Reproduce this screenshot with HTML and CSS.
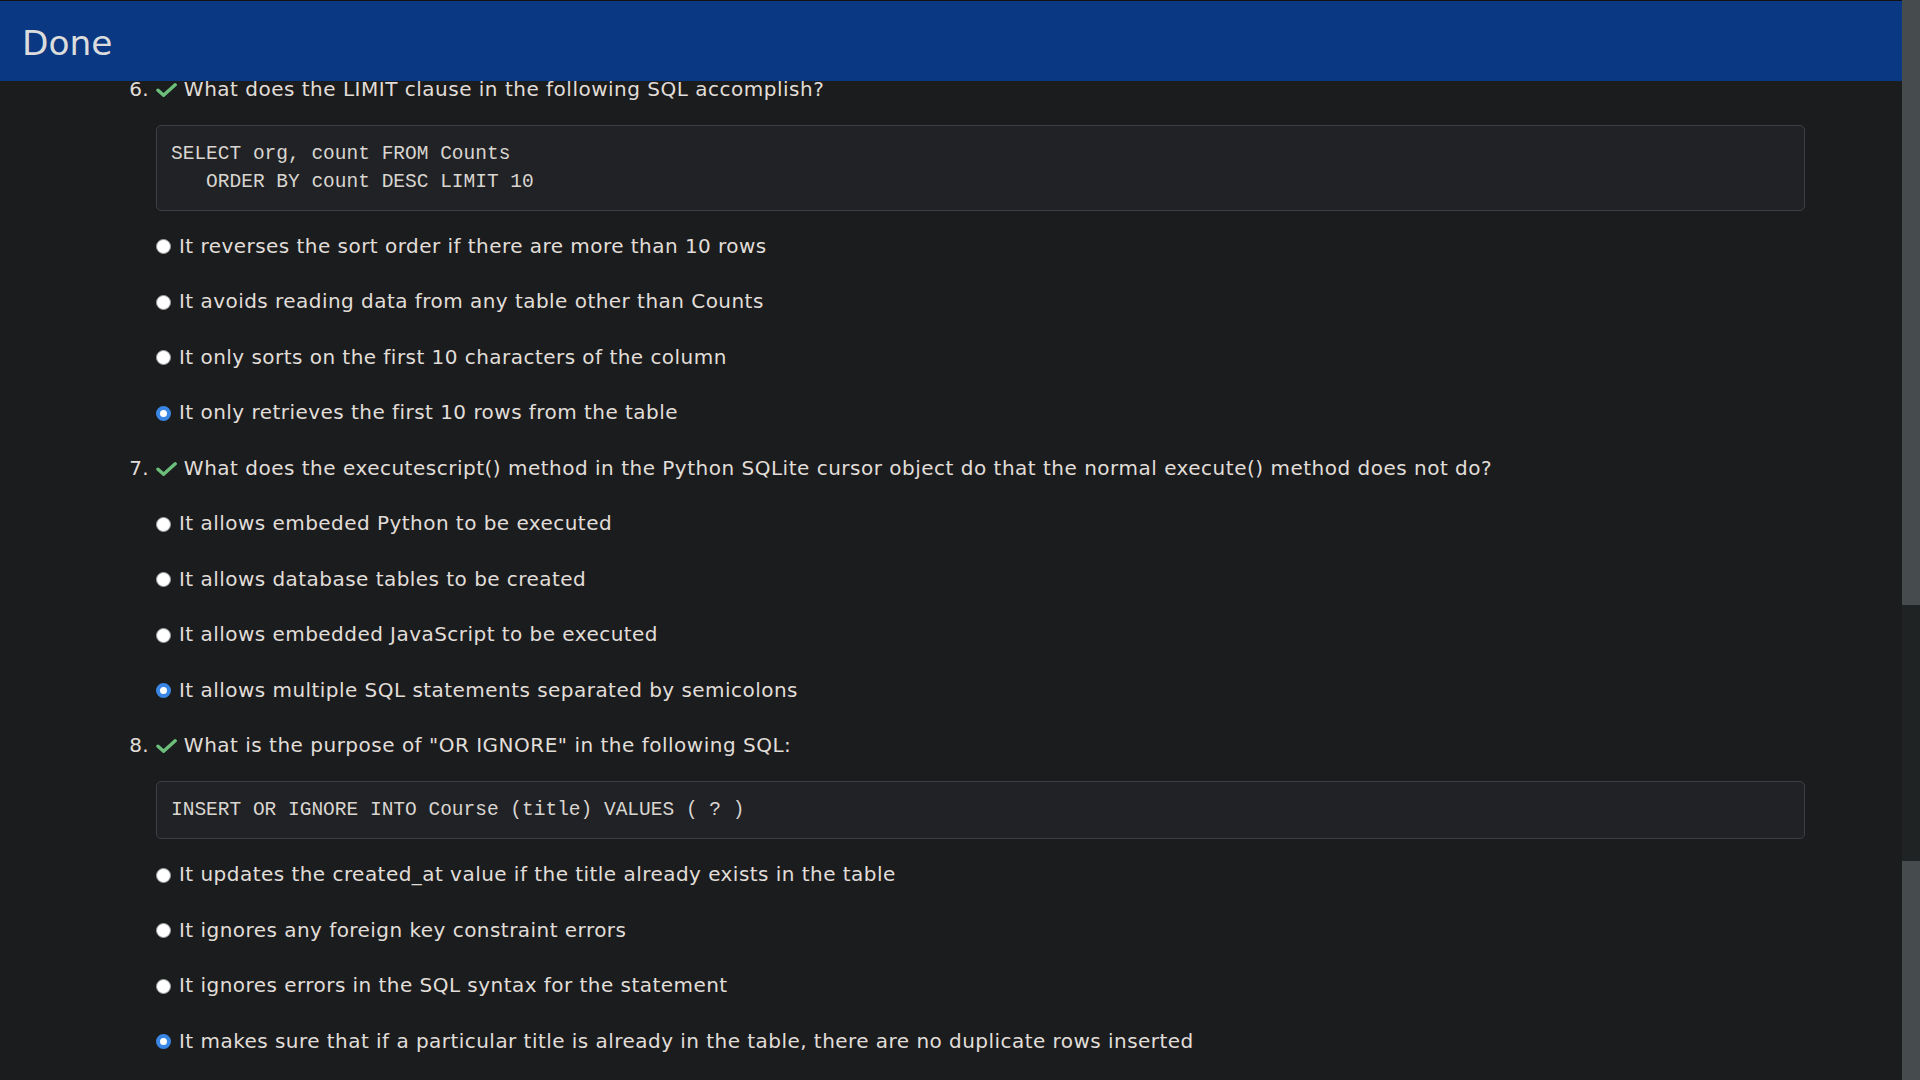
FILE: index.html
```html
<!DOCTYPE html>
<html lang="en">
<head>
<meta charset="utf-8">
<title>Done</title>
<link rel="stylesheet" href="styles.css">
</head>
<body>
<div class="app">
  <div class="main">
    <header class="topbar">Done</header>
    <div class="content">
      <ol class="questions" start="6">
        <li class="question">
          <div class="q-title"><svg class="check" viewBox="0 0 21 14" width="21" height="14"><path d="M2 7.2 L7.6 12.2 L19.2 1.8" fill="none" stroke="#6cbf7b" stroke-width="3.4" stroke-linecap="round" stroke-linejoin="round"/></svg> What does the LIMIT clause in the following SQL accomplish?</div>
          <pre class="code">SELECT org, count FROM Counts
   ORDER BY count DESC LIMIT 10</pre>
          <ul class="options">
            <li class="opt"><span class="radio"></span>It reverses the sort order if there are more than 10 rows</li>
            <li class="opt"><span class="radio"></span>It avoids reading data from any table other than Counts</li>
            <li class="opt"><span class="radio"></span>It only sorts on the first 10 characters of the column</li>
            <li class="opt"><span class="radio selected"></span>It only retrieves the first 10 rows from the table</li>
          </ul>
        </li>
        <li class="question">
          <div class="q-title"><svg class="check" viewBox="0 0 21 14" width="21" height="14"><path d="M2 7.2 L7.6 12.2 L19.2 1.8" fill="none" stroke="#6cbf7b" stroke-width="3.4" stroke-linecap="round" stroke-linejoin="round"/></svg> What does the executescript() method in the Python SQLite cursor object do that the normal execute() method does not do?</div>
          <ul class="options">
            <li class="opt"><span class="radio"></span>It allows embeded Python to be executed</li>
            <li class="opt"><span class="radio"></span>It allows database tables to be created</li>
            <li class="opt"><span class="radio"></span>It allows embedded JavaScript to be executed</li>
            <li class="opt"><span class="radio selected"></span>It allows multiple SQL statements separated by semicolons</li>
          </ul>
        </li>
        <li class="question">
          <div class="q-title"><svg class="check" viewBox="0 0 21 14" width="21" height="14"><path d="M2 7.2 L7.6 12.2 L19.2 1.8" fill="none" stroke="#6cbf7b" stroke-width="3.4" stroke-linecap="round" stroke-linejoin="round"/></svg> What is the purpose of "OR IGNORE" in the following SQL:</div>
          <pre class="code">INSERT OR IGNORE INTO Course (title) VALUES ( ? )</pre>
          <ul class="options">
            <li class="opt"><span class="radio"></span>It updates the created_at value if the title already exists in the table</li>
            <li class="opt"><span class="radio"></span>It ignores any foreign key constraint errors</li>
            <li class="opt"><span class="radio"></span>It ignores errors in the SQL syntax for the statement</li>
            <li class="opt"><span class="radio selected"></span>It makes sure that if a particular title is already in the table, there are no duplicate rows inserted</li>
          </ul>
        </li>
      </ol>
    </div>
  </div>
  <div class="scrollbar">
    <div class="sb-seg sb-light sb-top"></div>
    <div class="sb-seg sb-dark"></div>
    <div class="sb-seg sb-light sb-bottom"></div>
  </div>
</div>
</body>
</html>
```
FILE: styles.css
```css
html, body {
  margin: 0;
  padding: 0;
  height: 100%;
  overflow: hidden;
  background: #1b1c1e;
}

body {
  font-family: "DejaVu Sans", Verdana, sans-serif;
  color: #e1ded9;
  font-size: 20px;
}

.app {
  display: flex;
  height: 1080px;
}

.main {
  flex: 1;
  min-width: 0;
  overflow: hidden;
}

.topbar {
  position: sticky;
  top: 0;
  z-index: 2;
  height: 57px;
  border-top: 1px solid #101215;
  padding: 23px 0 0 22px;
  background: #0a3882;
  color: #dcdcdc;
  font-size: 34.4px;
  line-height: 39px;
}

.content {
  margin-top: -4.8px;
  padding: 0 97px 0 0;
}

.questions {
  margin: 0;
  padding: 0 0 0 156px;
  letter-spacing: 0.46px;
}

.question {
  margin: 0 0 27.75px 0;
}

.q-title {
  line-height: 27.75px;
  letter-spacing: 0.5px;
}

.check {
  vertical-align: -1px;
}

.code {
  margin: 21px 0 22px 0;
  padding: 14px;
  background: #212225;
  border: 1px solid #3c3f43;
  border-radius: 5px;
  font-family: "Liberation Mono", "Courier New", monospace;
  font-size: 19.5px;
  line-height: 28px;
  letter-spacing: 0;
  color: #d9d6d1;
}

.options {
  list-style: none;
  margin: 27.75px 0 0 0;
  padding: 0;
  display: flex;
  flex-direction: column;
  gap: 27.75px;
}

.code + .options {
  margin-top: 0;
}

.opt {
  display: flex;
  align-items: center;
  line-height: 27.75px;
}

.radio {
  flex: none;
  box-sizing: border-box;
  width: 15px;
  height: 15px;
  margin-right: 8px;
  border-radius: 50%;
  background: #ffffff;
  border: 1px solid #9a9a9a;
}

.radio.selected {
  border: 4px solid #3a86e4;
  background: #ffffff;
}

.scrollbar {
  flex: none;
  width: 18px;
  display: flex;
  flex-direction: column;
}

.sb-light {
  background: #464b4e;
}

.sb-dark {
  background: #202324;
}

.sb-top {
  height: 605px;
}

.sb-seg.sb-dark {
  height: 256px;
}

.sb-bottom {
  flex: 1;
}
```
